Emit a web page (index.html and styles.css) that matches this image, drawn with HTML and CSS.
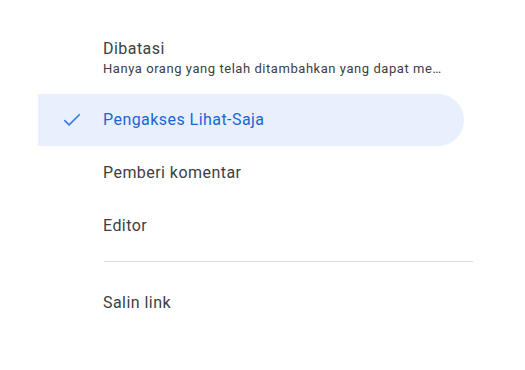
FILE: index.html
```html
<!DOCTYPE html>
<html lang="id">
<head>
<meta charset="utf-8">
<link rel="stylesheet" href="styles.css">
</head>
<body>
<div class="menu">
  <div class="item item-two">
    <span class="icon"></span>
    <div class="text">
      <div class="title">Dibatasi</div>
      <div class="sub">Hanya orang yang telah ditambahkan yang dapat me…</div>
    </div>
  </div>
  <div class="item selected">
    <span class="icon">
      <svg viewBox="0 0 24 24" width="24" height="24"><path d="M4.8 12.6l4.3 4.3 10.2-10.2" fill="none" stroke="currentColor" stroke-width="1.6" stroke-linecap="round" stroke-linejoin="round"/></svg>
    </span>
    <div class="text"><div class="title">Pengakses Lihat-Saja</div></div>
  </div>
  <div class="item">
    <span class="icon"></span>
    <div class="text"><div class="title">Pemberi komentar</div></div>
  </div>
  <div class="item">
    <span class="icon"></span>
    <div class="text"><div class="title">Editor</div></div>
  </div>
  <div class="divider"></div>
  <div class="item">
    <span class="icon"></span>
    <div class="text"><div class="title">Salin link</div></div>
  </div>
</div>
</body>
</html>
```
FILE: styles.css
```css
html, body {
  margin: 0;
  padding: 0;
  background: #ffffff;
}
body {
  font-family: Roboto, "Noto Sans", Arial, sans-serif;
  color: #3c4043;
}
.menu {
  width: 426px;
  margin-left: 38px;
  padding-top: 34px;
}
.item {
  display: flex;
  align-items: center;
  height: 52px;
  box-sizing: border-box;
  border-radius: 0 26px 26px 0;
}
.item + .item {
  margin-top: 1px;
}
.item-two {
  height: 58px;
  padding-top: 4px;
  align-items: flex-start;
  margin-bottom: 2px;
}
.icon {
  width: 24px;
  height: 24px;
  margin-left: 22px;
  margin-right: 19px;
  flex: none;
  display: flex;
  align-items: center;
  justify-content: center;
  color: #3b78e0;
}
.text {
  min-width: 0;
  flex: 1;
}
.title {
  font-size: 16px;
  letter-spacing: 0.45px;
  line-height: 22px;
  color: #3c4043;
}
.sub {
  font-size: 13px;
  letter-spacing: 0.55px;
  line-height: 18px;
  color: #3c4043;
  white-space: nowrap;
}
.selected {
  background: #e8f0fe;
}
.selected .title {
  color: #1967d2;
}
.divider {
  height: 1px;
  background: #dadce0;
  margin: 9px 0 15px 66px;
  width: 369px;
}
```
